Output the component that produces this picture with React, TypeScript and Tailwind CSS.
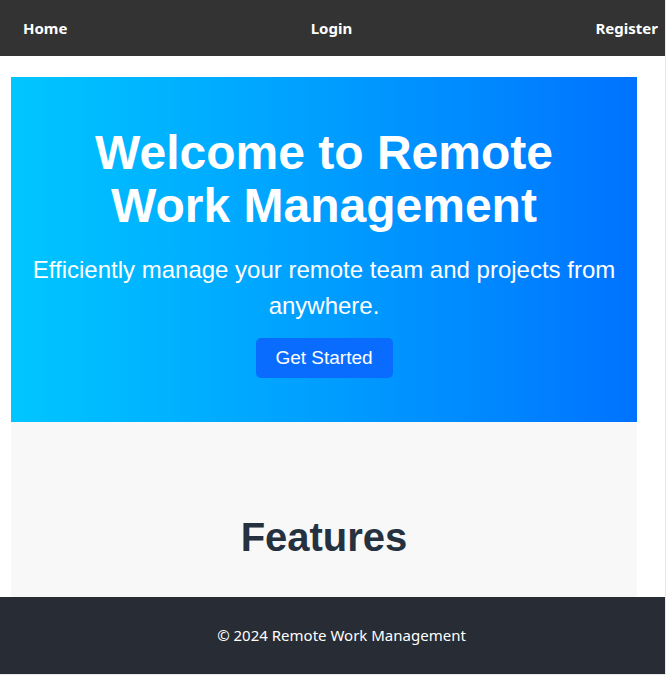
export default function App() {
  return (
    <div className="w-[666px] h-[675px] bg-white overflow-hidden flex flex-col border-r border-b border-[#e8e8e8]">
      <nav
        className="h-[56px] bg-[#333333] flex items-center justify-between pl-[23px] pr-[7px] text-white font-bold text-[15px] shrink-0"
        style={{ fontFamily: '"Noto Sans", "Open Sans", sans-serif' }}
      >
        <span>Home</span>
        <span>Login</span>
        <span>Register</span>
      </nav>
      <main className="pt-[21px] pl-[11px] pr-[28px] flex-1 flex flex-col" style={{ fontFamily: '"Liberation Sans", Arial, sans-serif' }}>
        <section className="h-[345px] bg-gradient-to-r from-[#00c6ff] to-[#0072ff] flex flex-col items-center text-white text-center pt-[49px] px-[8px]">
          <h1 className="text-[48px] leading-[53px] font-bold w-[480px]">Welcome to Remote Work Management</h1>
          <p className="mt-[20px] text-[24px] leading-[36px]">Efficiently manage your remote team and projects from anywhere.</p>
          <button className="mt-[14px] h-[40px] w-[137px] bg-[#0a6cff] rounded-[5px] text-[19px] text-white">Get Started</button>
        </section>
        <section className="flex-1 bg-[#f8f8f8] flex flex-col items-center pt-[91px]">
          <h2 className="text-[40px] leading-[48px] font-bold text-[#263140]">Features</h2>
        </section>
      </main>
      <footer
        className="h-[77px] bg-[#282c34] text-white flex items-center justify-center text-[15px] shrink-0 pl-[18px]"
        style={{ fontFamily: '"Noto Sans", "Open Sans", sans-serif' }}
      >
        © 2024 Remote Work Management
      </footer>
    </div>
  );
}
